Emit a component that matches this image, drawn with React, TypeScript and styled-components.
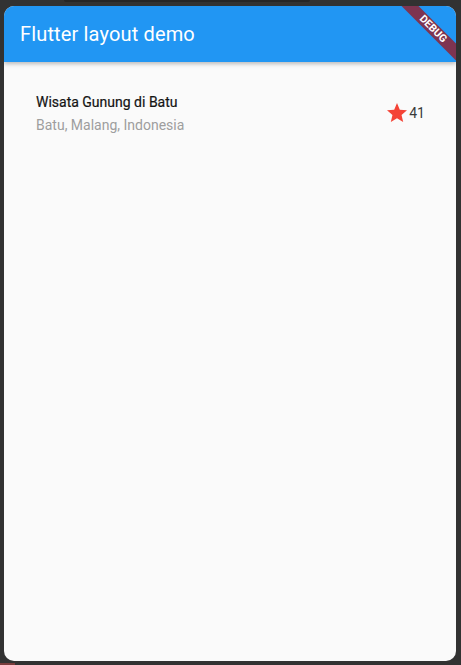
import styled, { createGlobalStyle } from 'styled-components';
import { MdStar } from 'react-icons/md';

const GlobalStyle = createGlobalStyle`
  html, body {
    margin: 0;
    padding: 0;
    background: #323232;
    font-family: Roboto, 'Noto Sans', sans-serif;
  }
`;

const App = () => {
  return (
    <>
      <GlobalStyle />
      <Device>
        <NotchRow>
          <Notch />
        </NotchRow>
        <Screen>
          <AppBar>
            <AppTitle>Flutter layout demo</AppTitle>
          </AppBar>
          <Body>
            <TitleSection>
              <Info>
                <PlaceName>Wisata Gunung di Batu</PlaceName>
                <PlaceLocation>Batu, Malang, Indonesia</PlaceLocation>
              </Info>
              <Rating>
                <MdStar size={24} color="#F44336" />
                <RatingCount>41</RatingCount>
              </Rating>
            </TitleSection>
          </Body>
          <DebugBanner>DEBUG</DebugBanner>
        </Screen>
        <BottomMark />
      </Device>
    </>
  );
};

export default App;

const Device = styled.div`
  width: 461px;
  height: 665px;
  display: flex;
  flex-direction: column;
  overflow: hidden;
`;

const NotchRow = styled.div`
  height: 6px;
  display: flex;
`;

const Notch = styled.div`
  margin-left: 64px;
  width: 246px;
  height: 2px;
  background: #262626;
  border-radius: 0 0 6px 6px;
`;

const Screen = styled.div`
  position: relative;
  margin: 0 5px 0 4px;
  height: 655px;
  background: #fafafa;
  border-radius: 10px;
  overflow: hidden;
  display: flex;
  flex-direction: column;
`;

const AppBar = styled.div`
  height: 56px;
  flex-shrink: 0;
  background: #2196f3;
  display: flex;
  align-items: center;
  padding: 0 16px;
  box-shadow: 0 2px 4px rgba(0, 0, 0, 0.25);
  z-index: 1;
`;

const AppTitle = styled.div`
  color: #fff;
  font-size: 20px;
  font-weight: 400;
  letter-spacing: 0.15px;
`;

const Body = styled.div`
  flex: 1;
  padding: 32px;
`;

const TitleSection = styled.div`
  display: flex;
  align-items: flex-start;
`;

const Info = styled.div`
  flex: 1;
  display: flex;
  flex-direction: column;
`;

const PlaceName = styled.div`
  font-size: 14px;
  font-weight: 400;
  color: #141414;
  padding-bottom: 6px;
  line-height: 17px;
  -webkit-text-stroke: 0.2px #141414;
`;

const PlaceLocation = styled.div`
  font-size: 14px;
  color: #9e9e9e;
  line-height: 17px;
`;

const Rating = styled.div`
  display: flex;
  align-items: center;
  margin-top: 7px;
  margin-right: -1px;
`;

const RatingCount = styled.span`
  font-size: 14px;
  color: #3a3a3a;
`;

const DebugBanner = styled.div`
  position: absolute;
  left: 379px;
  top: 17px;
  width: 100px;
  height: 12px;
  transform: rotate(45deg);
  background: #7e3451;
  color: #fff;
  font-size: 10.5px;
  font-weight: 700;
  line-height: 12px;
  text-align: center;
  z-index: 2;
`;

const BottomMark = styled.div`
  margin-top: 2px;
  width: 15px;
  height: 2px;
  background: #7a3c3c;
`;
